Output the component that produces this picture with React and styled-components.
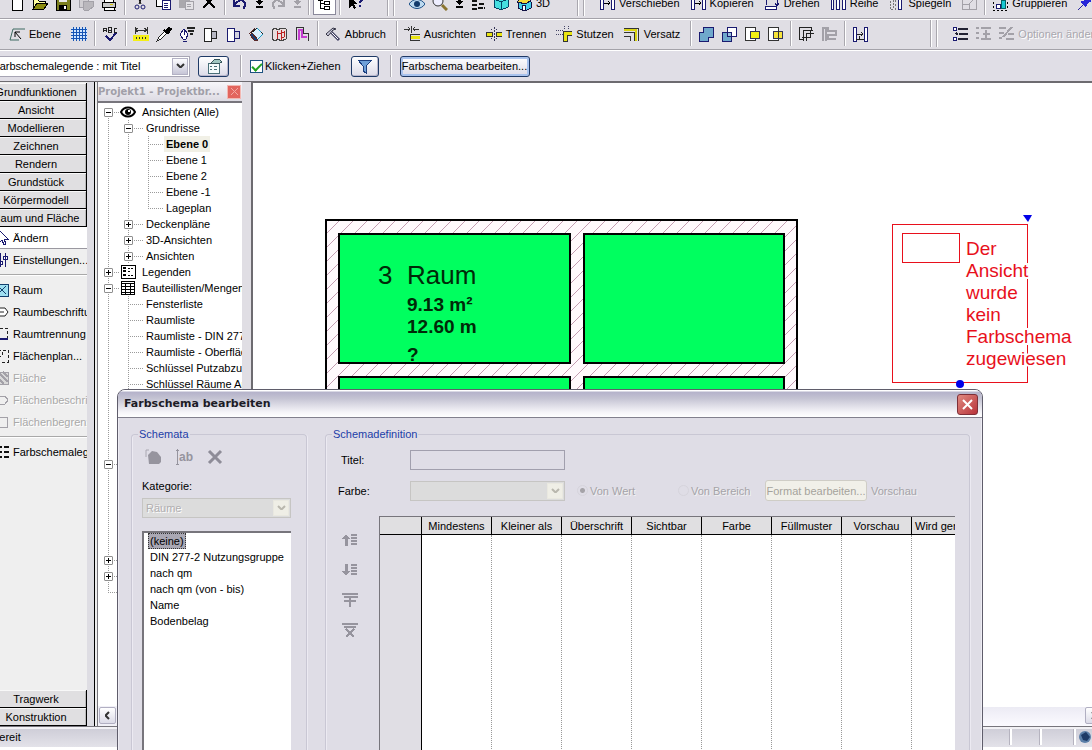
import React, { useState } from "react";
import styled, { createGlobalStyle } from "styled-components";

const NAVY = "#1a1a70";
const GREY = "#a3a1a8";

// 16x16 drawings for the toolbars and palettes
const icons = {
  newFile: <path d="M3 1h7l3 3v11H3z" fill="#fff" stroke="#000" />,
  open: (
    <>
      <path d="M1 14V4h5l1 2h6v3" fill="#ffffa0" stroke="#000" />
      <path d="M1 14l4-6h11l-4 6z" fill="#8c8c10" stroke="#000" />
    </>
  ),
  save: (
    <>
      <path d="M1 1h14v14H1z" fill="#7d8020" stroke="#000" />
      <path d="M4 1h8v6H4z" fill="#e8e8e8" />
      <path d="M4 10h8v5H4z" fill="#000" />
      <path d="M9 11h2v3H9z" fill="#fff" />
    </>
  ),
  preview: (
    <>
      <path d="M1 2h9v10H1z" fill="#d0ced2" stroke={GREY} />
      <path d="M5 6h10v6l-4 3H6z" fill="#b9b7bc" stroke={GREY} />
    </>
  ),
  print: (
    <>
      <path d="M4 1h9l-1 6H3z" fill="#fff" stroke="#000" />
      <path d="M1 7h13v5H1z" fill="#c9c9c9" stroke="#000" />
      <path d="M3 12h10l1 3H3z" fill="#fff" stroke="#000" />
      <path d="M9 9h3v1H9z" fill="#d6c600" />
    </>
  ),
  cut: (
    <g shapeRendering="auto" fill="none">
      <path d="M5 0l4 9M11 0L7 9" stroke="#000" />
      <circle cx="5" cy="12" r="2" stroke={NAVY} />
      <circle cx="11" cy="12" r="2" stroke={NAVY} />
    </g>
  ),
  copy: (
    <>
      <path d="M1 2h8v9H1z" fill="#fff" stroke="#000" />
      <path d="M7 5h8v9H7z" fill="#fff" stroke={NAVY} />
      <path d="M9 8h4M9 10h4M9 12h4" stroke={NAVY} />
    </>
  ),
  paste: (
    <>
      <path d="M1 1h11v12H1z" fill="#aaa8ad" />
      <path d="M7 6h8v8H7z" fill="#e4e2e6" stroke={GREY} />
      <path d="M9 9h4M9 11h4" stroke={GREY} />
    </>
  ),
  remove: <path d="M2 1l12 12M14 1L2 13" stroke="#000" strokeWidth="2" />,
  undo: (
    <path d="M2 4v7h6M3 10c3-6 9-6 10-1 0 2 0 3-2 5" fill="none" stroke={NAVY} strokeWidth="2" />
  ),
  redo: (
    <path d="M14 4v7H8M13 10C10 4 4 4 3 9c0 2 0 3 2 5" fill="none" stroke={GREY} strokeWidth="2" />
  ),
  tree: (
    <>
      <path d="M2 2h4v3H2zM8 6h5v3H8zM8 11h5v3H8z" fill="#fff" stroke="#000" />
      <path d="M4 5v8h4M4 8h4" fill="none" stroke="#000" />
    </>
  ),
  help: (
    <>
      <path d="M2 1v12l3-3 2 4 2-1-2-4h4z" fill="#000" />
      <path d="M11 4c0-3 4-3 4 0 0 2-2 2-2 4M13 10v2" fill="none" stroke={NAVY} strokeWidth="2" />
    </>
  ),
  view: (
    <g shapeRendering="auto">
      <path d="M0 9c4-6 12-6 16 0-4 6-12 6-16 0z" fill="#bcd9ef" stroke="#1c4f86" />
      <circle cx="8" cy="9" r="3" fill="#123a6b" />
    </g>
  ),
  zoom: (
    <g shapeRendering="auto">
      <circle cx="6" cy="6" r="5" fill="#eef" stroke="#333" />
      <path d="M10 10l5 5" stroke="#8a7430" strokeWidth="3" />
    </g>
  ),
  lines: (
    <path d="M2 6h5M2 10h5M2 14h5M10 4h5M9 9h6M8 13h7" stroke="#111" strokeWidth="2" strokeDasharray="5 1" />
  ),
  cube: (
    <>
      <path d="M1 4l7-3 7 3v8l-7 3-7-3z" fill="#45dfe0" stroke="#046" />
      <path d="M1 4l7 3 7-3M8 7v8" fill="none" stroke="#046" />
    </>
  ),
  house: (
    <>
      <path d="M2 7l5-5 8 5v6l-6 3-7-3z" fill="#45cfe8" stroke="#114" />
      <path d="M1 7l6-6 8 4-5 4z" fill="#f2d83a" stroke="#114" />
      <path d="M6 10h3v5H6z" fill="#fff" stroke="#114" />
    </>
  ),
  move: (
    <>
      <path d="M1 2h3v12H1zM12 2h3v12h-3z" fill="#fff" stroke={NAVY} />
      <path d="M5 8h6M9 6l2 2-2 2" fill="none" stroke="#000" />
    </>
  ),
  rotate: (
    <>
      <path d="M1 11h11v3H1z" fill="#fff" stroke={NAVY} />
      <path d="M2 2v8M13 3v7M11 8l2 3 2-3" fill="none" stroke={NAVY} />
    </>
  ),
  array: <path d="M1 2h2v12H1zM6 2h3v12H6zM12 2h3v12h-3z" fill="#fff" stroke={NAVY} />,
  mirror: (
    <>
      <path d="M2 2h3v12H2z" fill="none" stroke="#777" strokeDasharray="2 1" />
      <path d="M10 2h3v12h-3z" fill="#fff" stroke={NAVY} />
      <path d="M7 1v14" stroke="#777" strokeDasharray="2 2" />
    </>
  ),
  scale: <path d="M1 2h14v12H1zM1 9h7v5M8 9l6-6" fill="none" stroke={GREY} />,
  group: (
    <>
      <path d="M1 1h14v14H1z" fill="none" stroke="#000" strokeDasharray="2 2" />
      <path d="M4 9h4v4H4z" fill="#fff" stroke={NAVY} />
      <path d="M9 5h4v8H9z" fill="#19c8d4" stroke="#066" />
    </>
  ),
  pin: (
    <>
      <path d="M9 1l6 5-3 1-3 5-6-5 5-2z" fill="#2626d8" />
      <path d="M6 10l-5 5" stroke="#2626a0" />
    </>
  ),
  level: (
    <g shapeRendering="auto">
      <path d="M4 3h12M1 14h9M4 3L1 14" fill="none" stroke="#3f6b62" />
      <path d="M6 6h5M6 6v5M6 6l6 7" fill="none" stroke="#000" />
    </g>
  ),
  grid: (
    <>
      <path d="M1 2h15v12H1z" fill="#cfe6ff" />
      <path d="M0 3h16M0 6h16M0 9h16M0 12h16M2 1v14M5 1v14M8 1v14M11 1v14M14 1v14" stroke="#1554b5" />
    </>
  ),
  spell: (
    <>
      <path d="M1 6V2h3v4M1 4h3M6 1v5h3V1zM6 4h3M15 2h-3v4h3" fill="none" stroke="#222" />
      <path d="M4 10l4 4 6-7" fill="none" stroke={NAVY} strokeWidth="2" />
    </>
  ),
  measure: (
    <>
      <path d="M0 9h16v6H0z" fill="#f4ef16" />
      <path d="M2 1v7M14 1v7M2 4h12M5 2L2 4l3 2M11 2l3 2-3 2M3 13v-2M6 13v-2M9 13v-2M12 13v-2" fill="none" stroke="#333" />
    </>
  ),
  dropper: (
    <>
      <path d="M1 15l2-4 6-6 2 2-6 6z" fill="#fff" stroke="#222" />
      <path d="M8 4l4 4M10 5l3-3 2 1-3 4z" fill="#000" stroke="#000" strokeWidth="2" />
    </>
  ),
  paint: (
    <>
      <path d="M5 3l4 5-2 5H4L1 8z" fill="#fff" stroke={NAVY} />
      <path d="M5 3v6M4 15h4" stroke={NAVY} />
      <path d="M8 2h8M9 5h6M11 8h3" stroke="#222" strokeWidth="2" />
    </>
  ),
  joinLeft: (
    <>
      <path d="M2 2h7v13H2z" fill="#fff" stroke="#222" />
      <path d="M9 5h5v7H9z" fill="#b8b8c4" stroke="#222" />
    </>
  ),
  joinRight: (
    <>
      <path d="M2 2h7v13H2z" fill="#fff" stroke={NAVY} />
      <path d="M9 5h5v7H9z" fill="#d4d4e0" stroke={NAVY} />
    </>
  ),
  bucket: (
    <>
      <path d="M3 7l6-5 6 6-6 6z" fill="#d9efff" stroke="#222" />
      <path d="M1 8l6-6M2 9l5 6 3-1-6-7z" fill="#123f7c" stroke="#5a2a2a" />
      <path d="M9 2l4 4M10 13l5-5" stroke="#1c9bc4" />
    </>
  ),
  wall: (
    <>
      <path d="M1 4l3-2 3 2 3-2 5 1v10l-5 2-3-2-3 2-3-2z" fill="#e9dede" stroke="#444" />
      <path d="M6 5v8M10 4v10M7 8l6-2v5l-3 1" fill="none" stroke="#b22" />
    </>
  ),
  profile: (
    <>
      <path d="M2 14V1h7v6h5v8" fill="none" stroke="#333" />
      <path d="M5 14V4h3v7h5" fill="none" stroke="#c43fd0" strokeWidth="2" />
    </>
  ),
  hammer: (
    <g shapeRendering="auto">
      <path d="M5 5l9 9" stroke="#446" strokeWidth="3" />
      <path d="M6 6l7 7" stroke="#fff" />
      <path d="M1 8l7-6 3 1-3 1-5 6z" fill="#ccd" stroke="#334" />
    </g>
  ),
  align: (
    <>
      <path d="M0 3h6M4 1l2 2-2 2M15 3H9M11 1L9 3l2 2M7 0v7" fill="none" stroke="#333" />
      <path d="M6 8h10M6 14h10M6 8v6" fill="none" stroke="#333" />
      <path d="M7 11h9" stroke="#e9e412" strokeWidth="3" />
    </>
  ),
  split: (
    <>
      <path d="M0 6h6v4H0zM10 6h6v4h-6z" fill="#e9e412" stroke="#333" />
      <path d="M8 1v14M5 3l2 2M11 3L9 5M5 13l2-2M11 13l-2-2" stroke="#335" strokeDasharray="2 1" />
    </>
  ),
  trim: (
    <>
      <path d="M0 4h7M0 8h7M8 0v4M12 0v4" stroke="#446" strokeDasharray="1 1" />
      <path d="M16 5H7v10h4v-6h5z" fill="#e9e412" stroke="#333" />
    </>
  ),
  offset: (
    <>
      <path d="M0 2h14v13" fill="none" stroke="#333" />
      <path d="M0 4h12v11" fill="none" stroke="#d9d412" strokeWidth="2" />
      <path d="M0 6h10v9M0 10h6v5" fill="none" stroke="#333" />
    </>
  ),
  union: (
    <path d="M5 1h10v10h-5v4H1V6h4z" fill="#6fa8cc" stroke={NAVY} />
  ),
  subtract: (
    <>
      <path d="M1 6h9v9H1z" fill="#6fa8cc" stroke={NAVY} />
      <path d="M6 1h9v9H6z" fill="#fff" stroke={NAVY} />
      <path d="M6 6h4v4H6z" fill="#9cc4e0" stroke={NAVY} />
    </>
  ),
  yellowIn: (
    <>
      <path d="M1 1h10v13H1z" fill="#fff" stroke="#333" />
      <path d="M6 5h9v7H6z" fill="#f2ee12" stroke="#335" />
    </>
  ),
  yellowOut: (
    <>
      <path d="M1 1h10v13H1z" fill="#fff" stroke="#333" />
      <path d="M6 5h9v7H6z" fill="#f7e33a" stroke="#335" />
      <path d="M11 5v7" stroke="#333" />
    </>
  ),
  corner: (
    <path d="M1 1h12v3M1 1v12h4M5 4h10M5 4v11M8 7h8M8 7v8M4 11h8V4" fill="none" stroke="#222" />
  ),
  cornerOff: (
    <path d="M2 1v14M5 1v14M2 2h5v3h8v4H7v4h8" fill="none" stroke={GREY} strokeWidth="2" />
  ),
  attach: (
    <>
      <path d="M1 1h3v14H1zM12 1h3v14h-3z" fill="#fff" stroke={NAVY} />
      <path d="M4 13h8M5 8h6M9 6l2 2-2 2M7 10v4" fill="none" stroke="#222" />
    </>
  ),
  options: (
    <>
      <path d="M1 1h3v3H1zM1 11h3v3H1z" fill="#fff" stroke={NAVY} />
      <path d="M4 7l2 2M6 3h10M7 8h9M6 13h10" stroke="#223" strokeWidth="2" />
    </>
  ),
  optionsOff: (
    <>
      <path d="M1 2h3M1 7h3M1 12h3M6 2h10M6 13h10M8 8h7" stroke={GREY} strokeWidth="2" />
      <path d="M11 4v8" stroke={GREY} strokeWidth="2" />
    </>
  ),
  editOff: (
    <>
      <path d="M1 2h7M1 7h5M1 12h3M10 8h6M8 13h8" stroke={GREY} strokeWidth="2" />
      <path d="M14 1L5 11" stroke={GREY} strokeWidth="2" />
    </>
  ),
  properties: (
    <>
      <path d="M2 5h11v10H2z" fill="#f4fbfb" stroke="#4a6f78" />
      <path d="M4 8h2M8 8h3M4 11h2M8 11h3" stroke="#4a6f78" />
      <path d="M5 5l4-4h4l3 3-4 2-4-1z" fill="#9fc6c0" stroke="#37555c" />
    </>
  ),
  filter: <path d="M1 2h14L9 8v7l-3-2V8z" fill="#6fa0d8" stroke="#1c3f80" />,
  eye: (
    <g shapeRendering="auto">
      <path d="M1 8c3-6 11-6 14 0-3 6-11 6-14 0z" fill="#fff" stroke="#000" strokeWidth="2" />
      <circle cx="8" cy="8" r="3" fill="#000" />
      <path d="M8 6h2v2H8z" fill="#fff" />
    </g>
  ),
  legend: (
    <>
      <path d="M1 1h14v13H1z" fill="#fff" stroke="#000" />
      <path d="M3 4h3M3 7h3M3 11h3" stroke="#000" strokeWidth="2" />
      <path d="M8 4h5M8 7h3M8 11h5" stroke="#000" strokeDasharray="2 1" />
    </>
  ),
  schedule: (
    <>
      <path d="M1 1h13v13H1z" fill="#fff" stroke="#000" />
      <path d="M1 3h13M1 6h13M1 9h13M1 12h13M5 3v11M10 3v11" stroke="#000" />
    </>
  ),
  cursor: <path d="M6 0v13l3-3 2 5 2-1-2-5h4z" fill="#fff" stroke={NAVY} />,
  settings: (
    <path d="M7 1v14M12 1v14M5 9h4v3H5zM10 4h4v3h-4z" fill="#fff" stroke={NAVY} />
  ),
  room: (
    <>
      <path d="M2 2h13v12H2z" fill="#9fe0f2" stroke="#14406e" />
      <path d="M5 4l8 8M13 4l-8 8" stroke="#14406e" />
    </>
  ),
  tag: (
    <g shapeRendering="auto">
      <path d="M2 4h10l3 4-3 4H2z" fill="#fff" stroke="#222" />
      <path d="M6 8h5" stroke="#222" />
    </g>
  ),
  divider: (
    <>
      <path d="M2 2h12v12" fill="none" stroke="#222" strokeDasharray="3 2" />
      <path d="M2 13h13" stroke={NAVY} strokeWidth="2" />
    </>
  ),
  areaPlan: <path d="M5 2h10v12H4V8h5V2" fill="none" stroke="#222" strokeDasharray="3 2" />,
  area: (
    <>
      <path d="M2 2h13v12H2z" fill="#d8d8d8" stroke={GREY} />
      <path d="M5 2l10 10M2 5l9 9M10 2l5 5" stroke={GREY} strokeWidth="2" />
    </>
  ),
  tagOff: <path d="M2 4h10l3 4-3 4H2z" fill="none" stroke={GREY} />,
  boundOff: <path d="M2 3h12v10H2" fill="none" stroke={GREY} />,
  scheme: (
    <path d="M6 3h3M6 8h3M6 13h3M11 3h5M11 8h5M11 13h5" stroke="#111" strokeWidth="2" />
  ),
  duplicate: (
    <g shapeRendering="auto">
      <path d="M1 1v7M1 1h3" fill="none" stroke="#aaa8b2" />
      <path d="M3 6l4-4 5 1 4 5v5l-2 2H4z" fill="#96949e" />
    </g>
  ),
  rename: (
    <path d="M1 0v16M0 1h3M0 15h3" fill="none" stroke="#96949e" />
  ),
  cross: (
    <path d="M2 2l12 12M14 2L2 14" stroke="#8e8c98" strokeWidth="3" shapeRendering="auto" />
  ),
  rowUp: (
    <>
      <path d="M3 14V7H0l4-5 4 5H6v7z" fill="#96949e" />
      <path d="M9 3h6M9 6h6M9 9h6M9 12h6" stroke="#96949e" strokeWidth="2" />
    </>
  ),
  rowDown: (
    <>
      <path d="M3 2v7H0l4 5 4-5H6V2z" fill="#96949e" />
      <path d="M9 3h6M9 6h6M9 9h6M9 12h6" stroke="#96949e" strokeWidth="2" />
    </>
  ),
  rowAdd: <path d="M0 2h16M2 5h14M8 5v10M2 9h12" stroke="#96949e" strokeWidth="2" />,
  rowDelete: <path d="M0 2h16M2 5h12M4 7l8 8M12 7l-8 8" stroke="#96949e" strokeWidth="2" />,
};

function Icon({ name }) {
  return (
    <Glyph viewBox="0 0 16 16" shapeRendering="crispEdges" aria-hidden="true">
      {icons[name]}
    </Glyph>
  );
}

const standardTools = [
  "newFile", "open", "save", "preview", "print", "|",
  "cut", "copy", "paste", "remove", "|",
  "undo", "v", "redo", "v-off", "|",
];

const modifyTools = [
  ["move", "Verschieben"],
  ["move", "Kopieren"],
  ["rotate", "Drehen"],
  ["array", "Reihe"],
  ["mirror", "Spiegeln"],
];

const editTools = [
  ["align", "Ausrichten"],
  ["split", "Trennen"],
  ["trim", "Stutzen"],
  ["offset", "Versatz"],
];

const categories = [
  "Grundfunktionen", "Ansicht", "Modellieren", "Zeichnen",
  "Rendern", "Grundstück", "Körpermodell", "Raum und Fläche",
];

const roomTools = [
  ["room", "Raum"],
  ["tag", "Raumbeschriftung"],
  ["divider", "Raumtrennung"],
  ["areaPlan", "Flächenplan..."],
  ["area", "Fläche", true],
  ["tagOff", "Flächenbeschriftung", true],
  ["boundOff", "Flächenbegrenzung", true],
];

// one cell per level: "|" passes through, "+"/"-" expander, "t" branch, "l" last branch
const treeRows = [
  { cells: "-", icon: "eye", label: "Ansichten (Alle)", first: true },
  { cells: "|-", label: "Grundrisse" },
  { cells: "||t", label: "Ebene 0", active: true },
  { cells: "||t", label: "Ebene 1" },
  { cells: "||t", label: "Ebene 2" },
  { cells: "||t", label: "Ebene -1" },
  { cells: "||l", label: "Lageplan" },
  { cells: "|+", label: "Deckenpläne" },
  { cells: "|+", label: "3D-Ansichten" },
  { cells: "|+", label: "Ansichten" },
  { cells: "+", icon: "legend", label: "Legenden" },
  { cells: "-", icon: "schedule", label: "Bauteillisten/Mengen" },
  { cells: "|t", label: "Fensterliste" },
  { cells: "|t", label: "Raumliste" },
  { cells: "|t", label: "Raumliste - DIN 277" },
  { cells: "|t", label: "Raumliste - Oberflächen" },
  { cells: "|t", label: "Schlüssel Putzabzug" },
  { cells: "|t", label: "Schlüssel Räume Art" },
  { cells: "|t" },
  { cells: "|t" },
  { cells: "|t" },
  { cells: "|l" },
  { cells: "-" },
  { cells: "|t" },
  { cells: "|t" },
  { cells: "|t" },
  { cells: "|t" },
  { cells: "|l" },
  { cells: "+" },
  { cells: "+" },
  { cells: "l" },
];

const schemes = ["(keine)", "DIN 277-2 Nutzungsgruppe", "nach qm", "nach qm (von - bis)", "Name", "Bodenbelag"];

const columns = ["Mindestens", "Kleiner als", "Überschrift", "Sichtbar", "Farbe", "Füllmuster", "Vorschau"];

function Tool({ icon, label, off, pressed }) {
  return (
    <ToolButton disabled={off} $pressed={pressed} $labelled={!!label} aria-label={label || icon}>
      <Icon name={icon} />
      {label}
    </ToolButton>
  );
}

function DropArrow({ off }) {
  return (
    <ArrowButton disabled={off} aria-label="Liste öffnen">
      <svg width="9" height="12" viewBox="0 0 9 12" shapeRendering="crispEdges">
        <path d="M3 1h3v3h2L5 8H4L1 4h2zM1 9h7v2H1z" fill={off ? GREY : "#000"} />
      </svg>
    </ArrowButton>
  );
}

function Toolbars() {
  return (
    <header>
      <Toolbar>
        {standardTools.map((tool, i) => {
          if (tool === "|") return <Separator key={i} />;
          if (tool[0] === "v") return <DropArrow key={i} off={tool === "v-off"} />;
          return <Tool key={i} icon={tool} off={["preview", "paste", "redo"].includes(tool)} />;
        })}
        <Tool icon="tree" pressed />
        <Separator />
        <Tool icon="help" />
        <Grip $before="20px" />
        <Tool icon="view" />
        <Tool icon="zoom" />
        <DropArrow />
        <Tool icon="lines" />
        <Tool icon="cube" />
        <Tool icon="house" label="3D" />
        <Grip $before="20px" />
        {modifyTools.map(([icon, label]) => (
          <Tool key={label} icon={icon} label={label} />
        ))}
        <Tool icon="scale" off />
        <Separator />
        <Tool icon="group" label="Gruppieren" />
        <Tool icon="pin" />
      </Toolbar>

      <Toolbar>
        <Tool icon="level" label="Ebene" />
        <Tool icon="grid" />
        <Separator />
        <Tool icon="spell" />
        <Separator />
        {["measure", "dropper", "paint", "joinLeft", "joinRight", "bucket", "wall", "profile"].map((icon) => (
          <Tool key={icon} icon={icon} />
        ))}
        <Separator />
        <Tool icon="hammer" label="Abbruch" />
        <Separator />
        {editTools.map(([icon, label]) => (
          <Tool key={label} icon={icon} label={label} />
        ))}
        <Separator />
        <Tool icon="union" />
        <Tool icon="subtract" />
        <Tool icon="yellowIn" />
        <Tool icon="yellowOut" />
        <Separator />
        <Tool icon="corner" />
        <Tool icon="cornerOff" off />
        <Separator />
        <Tool icon="attach" />
        <Grip $before="58px" />
        <Tool icon="options" />
        <Tool icon="optionsOff" off />
        <Tool icon="editOff" label="Optionen ändern" off />
      </Toolbar>

      <OptionsBar>
        <TypeCombo>
          <select aria-label="Typ" defaultValue="mt">
            <option value="mt">Farbschemalegende : mit Titel</option>
          </select>
          <Chevron />
        </TypeCombo>
        <PushButton $width="31px" aria-label="Eigenschaften">
          <Icon name="properties" />
        </PushButton>
        <Divider />
        <CheckLabel>
          <input type="checkbox" defaultChecked />
          Klicken+Ziehen
        </CheckLabel>
        <PushButton $width="28px" aria-label="Filter">
          <Icon name="filter" />
        </PushButton>
        <Divider />
        <PushButton $width="130px" $focus>
          Farbschema bearbeiten...
        </PushButton>
      </OptionsBar>
    </header>
  );
}

function Chevron({ off }) {
  return (
    <ChevronBox $off={off}>
      <svg width="9" height="6" viewBox="0 0 9 6">
        <path d="M1 1l3 3h1l3-3" fill="none" stroke={off ? "#b9b7ae" : "#333"} strokeWidth="2" />
      </svg>
    </ChevronBox>
  );
}

function DesignBar() {
  return (
    <Palette>
      {categories.map((name) => (
        <Category key={name}>{name}</Category>
      ))}
      <PaletteItem $active>
        <Icon name="cursor" />
        Ändern
      </PaletteItem>
      <PaletteItem>
        <Icon name="settings" />
        Einstellungen...
      </PaletteItem>
      <Rule />
      {roomTools.map(([icon, label, off]) => (
        <PaletteItem key={label} disabled={off}>
          <Icon name={icon} />
          {label}
        </PaletteItem>
      ))}
      <Rule />
      <PaletteItem>
        <Icon name="scheme" />
        Farbschemalegende
      </PaletteItem>
      <Spacer />
      <Category>Tragwerk</Category>
      <Category>Konstruktion</Category>
    </Palette>
  );
}

function ProjectBrowser() {
  return (
    <Browser>
      <BrowserTitle>
        <span>Projekt1 - Projektbr...</span>
        <button aria-label="Schließen">
          <svg width="9" height="9" viewBox="0 0 9 9">
            <path d="M1 1l7 7M8 1L1 8" stroke="#f3aaa4" />
          </svg>
        </button>
      </BrowserTitle>
      <Tree>
        {treeRows.map((row, i) => (
          <TreeRow key={i}>
            {row.cells.split("").map((cell, level) => (
              <Guide key={level} $kind={cell} $first={row.first}>
                {(cell === "+" || cell === "-") && (
                  <Expander aria-label={cell === "+" ? "Öffnen" : "Zuklappen"} $closed={cell === "+"} />
                )}
              </Guide>
            ))}
            <Stub $short={!!row.icon} />
            {row.icon && <Icon name={row.icon} />}
            {row.label && (
              <TreeLabel $active={row.active} $wide={!!row.icon}>
                {row.label}
              </TreeLabel>
            )}
          </TreeRow>
        ))}
      </Tree>
      <ScrollTrack>
        <ScrollButton aria-label="Nach links">
          <svg width="7" height="9" viewBox="0 0 7 9">
            <path d="M5 1L2 4v1l3 3" fill="none" stroke="#333" strokeWidth="2" />
          </svg>
        </ScrollButton>
      </ScrollTrack>
    </Browser>
  );
}

function Drawing() {
  const note = ["Der", "Ansicht", "wurde", "kein", "Farbschema", "zugewiesen"];
  return (
    <Sheet aria-label="Grundriss">
      <defs>
        <pattern id="hatch" width="14" height="14" patternUnits="userSpaceOnUse">
          <path d="M0 14L14 0" stroke="#c49db2" />
        </pattern>
      </defs>
      <g stroke="#000" strokeWidth="2">
        <rect x="73" y="137" width="471" height="420" fill="#fff9fc" />
        <rect x="73" y="137" width="471" height="420" fill="url(#hatch)" />
        <g fill="#00ff5f">
          <rect x="86" y="151" width="231" height="129" />
          <rect x="331" y="151" width="200" height="129" />
          <rect x="86" y="294" width="231" height="129" />
          <rect x="331" y="294" width="200" height="129" />
        </g>
      </g>
      <g fill="#002a08" fontSize="19" fontWeight="bold">
        <text x="125" y="201" fontSize="26" fontWeight="normal">3</text>
        <text x="154" y="201" fontSize="26" fontWeight="normal">Raum</text>
        <text x="154" y="228">9.13 m²</text>
        <text x="154" y="250">12.60 m</text>
        <text x="154" y="278">?</text>
      </g>
      <g fill="none" stroke="#e8101c" shapeRendering="crispEdges">
        <rect x="639" y="141" width="135" height="158" />
        <rect x="649" y="150" width="57" height="29" />
      </g>
      <g fill="#e8101c" stroke="#fff" strokeWidth="4" paintOrder="stroke" fontSize="19">
        {note.map((line, i) => (
          <text key={line} x="713" y={172 + i * 22}>
            {line}
          </text>
        ))}
      </g>
      <path d="M770 132h9l-4 7z" fill="#0000e8" />
      <circle cx="707" cy="301" r="4" fill="#0000e8" />
    </Sheet>
  );
}

function SchemeDialog() {
  const [selected, setSelected] = useState("(keine)");

  return (
    <Dialog role="dialog" aria-labelledby="dialog-title">
      <TitleBar>
        <h1 id="dialog-title">Farbschema bearbeiten</h1>
        <CloseButton aria-label="Schließen">
          <svg width="13" height="13" viewBox="0 0 13 13">
            <path d="M2 2l9 9M11 2l-9 9" stroke="#fff" strokeWidth="2" />
          </svg>
        </CloseButton>
      </TitleBar>
      <DialogBody>
        <Group $width="176px">
          <legend>Schemata</legend>
          <SchemeTools>
            <button disabled aria-label="Duplizieren"><Icon name="duplicate" /></button>
            <button disabled aria-label="Umbenennen"><Icon name="rename" /><b>ab</b></button>
            <button disabled aria-label="Löschen"><Icon name="cross" /></button>
          </SchemeTools>
          <FieldLabel htmlFor="category">Kategorie:</FieldLabel>
          <Combo $off>
            <select id="category" disabled>
              <option>Räume</option>
            </select>
            <Chevron off />
          </Combo>
          <ListBox role="listbox" aria-label="Schemata">
            {schemes.map((name) => (
              <li key={name} role="option" aria-selected={name === selected}>
                <Scheme $selected={name === selected} onClick={() => setSelected(name)}>
                  {name}
                </Scheme>
              </li>
            ))}
          </ListBox>
        </Group>

        <Group $grow>
          <legend>Schemadefinition</legend>
          <TitleRow>
            <label htmlFor="title">Titel:</label>
            <input id="title" type="text" disabled />
          </TitleRow>
          <ColorRow>
            <label htmlFor="color">Farbe:</label>
            <Combo $off $width="155px">
              <select id="color" disabled />
              <Chevron off />
            </Combo>
            <RadioLabel $width="101px">
              <input type="radio" name="mode" defaultChecked disabled />
              Von Wert
            </RadioLabel>
            <RadioLabel $width="87px">
              <input type="radio" name="mode" disabled />
              Von Bereich
            </RadioLabel>
            <FormatButton disabled>Format bearbeiten...</FormatButton>
            <Muted>Vorschau</Muted>
          </ColorRow>
          <TableArea>
            <RowTools>
              {["rowUp", "rowDown", "rowAdd", "rowDelete"].map((name) => (
                <button key={name} disabled aria-label={name}>
                  <Icon name={name} />
                </button>
              ))}
            </RowTools>
            <TableFrame>
              <Table>
                <thead>
                  <tr>
                    <Th $narrow aria-label="Zeile" />
                    {columns.map((name) => (
                      <Th key={name}>{name}</Th>
                    ))}
                    <Th $start>Wird genutzt</Th>
                  </tr>
                </thead>
                <tbody>
                  <tr>
                    <Td $head />
                    {columns.map((name) => (
                      <Td key={name} />
                    ))}
                    <Td />
                  </tr>
                </tbody>
              </Table>
            </TableFrame>
          </TableArea>
        </Group>
      </DialogBody>
    </Dialog>
  );
}

export default function App() {
  return (
    <Screen>
      <GlobalStyle />
      <MainWindow>
        <Toolbars />
        <Workspace>
          <DesignBar />
          <Splitter />
          <ProjectBrowser />
          <Canvas>
            <Drawing />
            <CanvasScroll>
              <ScrollButton aria-label="Nach rechts">
                <svg width="7" height="9" viewBox="0 0 7 9">
                  <path d="M2 1l3 3v1L2 8" fill="none" stroke="#333" strokeWidth="2" />
                </svg>
              </ScrollButton>
            </CanvasScroll>
          </Canvas>
        </Workspace>
        <StatusBar>
          <span>Bereit</span>
          <Pane />
          <Pane />
          <Pane $wide />
          <svg width="16" height="18" viewBox="0 0 16 18">
            <circle cx="9" cy="9" r="6" fill="#5c7fa8" />
            <path d="M5 7l5-3 4 5-3 4-4-1z" fill="#1e3a66" />
          </svg>
        </StatusBar>
      </MainWindow>
      <SchemeDialog />
    </Screen>
  );
}

const GlobalStyle = createGlobalStyle`
  * {
    box-sizing: border-box;
  }

  body {
    margin: 0;
    font-family: "Liberation Sans", Arial, sans-serif;
    font-size: 11px;
    line-height: 16px;
    color: #000;
  }

  button, input, select {
    font: inherit;
    color: inherit;
    margin: 0;
  }

  button {
    border: none;
    background: none;
    padding: 0;
  }
`;

const Screen = styled.div`
  position: relative;
  height: 100vh;
  overflow: hidden;
  background: #dfdde5;
`;

// the program window reaches past the top left corner of the screen
const MainWindow = styled.div`
  display: flex;
  flex-direction: column;
  height: calc(100vh + 12px);
  margin: -12px 0 0 -16px;
`;

const Glyph = styled.svg`
  width: 16px;
  height: 16px;
  flex: none;
`;

const Toolbar = styled.div`
  display: flex;
  align-items: center;
  height: 31px;
  padding: 0 0 2px 22px;
  overflow: hidden;
  background: #e0dee4;
  border-top: 1px solid #fff;
  border-bottom: 1px solid #a4a2a9;
`;

const ToolButton = styled.button`
  display: flex;
  align-items: center;
  flex: none;
  gap: 4px;
  height: 24px;
  padding: 0 ${({ $labelled }) => ($labelled ? "7px" : "4px")} 0 3px;
  white-space: nowrap;
  background: ${({ $pressed }) => ($pressed ? "#fff" : "none")};
  box-shadow: ${({ $pressed }) => ($pressed ? "inset 0 0 0 1px #8a889a" : "none")};

  &:disabled {
    color: #a9a7ae;
    text-shadow: 1px 1px 0 #fff;
  }
`;

const ArrowButton = styled.button`
  display: flex;
  align-items: center;
  flex: none;
  width: 15px;
  height: 24px;
  padding-left: 3px;
`;

const Separator = styled.span`
  flex: none;
  width: 1px;
  height: 25px;
  margin: 0 4px 0 3px;
  background: #a9a7ae;
  box-shadow: 1px 0 0 #fff;
`;

const Grip = styled.span`
  flex: none;
  width: 7px;
  height: 27px;
  margin: 0 12px 0 ${({ $before }) => $before};
  border-left: 1px solid #a9a7ae;
  border-right: 1px solid #a9a7ae;
  box-shadow: inset 1px 0 0 #fff, 1px 0 0 #fff;
`;

const OptionsBar = styled.div`
  display: flex;
  align-items: center;
  height: 32px;
  background: #e0dee6;
  border-top: 1px solid #fff;
  border-bottom: 1px solid #6d6b70;
`;

const Combo = styled.div`
  display: flex;
  width: ${({ $width }) => $width || "auto"};
  height: ${({ $off }) => ($off ? "20px" : "21px")};
  padding: 1px;
  background: ${({ $off }) => ($off ? "#dcdcdc" : "#fff")};
  border: 1px solid ${({ $off }) => ($off ? "#c6c5c3" : "#a7a5b4")};

  select {
    flex: 1;
    min-width: 0;
    padding: 0 2px;
    border: none;
    appearance: none;
    background: none;
    opacity: 1;
  }

  select:disabled {
    color: #b0aeb0;
    text-shadow: 1px 1px 0 #fff;
  }
`;

const TypeCombo = styled(Combo)`
  width: 206px;
  padding-left: 6px;
`;

const ChevronBox = styled.span`
  display: flex;
  align-items: center;
  justify-content: center;
  width: 16px;
  background: ${({ $off }) => ($off ? "#efeee6" : "linear-gradient(#fdfdff, #c6c5d6)")};
  border: 1px solid ${({ $off }) => ($off ? "#e9e8e0" : "#b3b1c4")};
`;

const PushButton = styled.button`
  display: flex;
  align-items: center;
  justify-content: center;
  width: ${({ $width }) => $width};
  height: 21px;
  margin-left: 8px;
  white-space: nowrap;
  background: linear-gradient(#fff, #dcdbe8);
  border: 1px solid #1f3a66;
  border-radius: 3px;
  box-shadow: ${({ $focus }) => ($focus ? "inset 0 0 0 2px #a9c3ee" : "inset -1px -1px 0 #b9b7cc")};
`;

const Divider = styled.span`
  width: 1px;
  height: 22px;
  margin: 0 1px 0 11px;
  background: #a9a7ae;
  box-shadow: 1px 0 0 #fff;
`;

const CheckLabel = styled.label`
  display: flex;
  align-items: center;
  gap: 2px;
  margin: 0 2px 0 8px;

  input {
    appearance: none;
    width: 13px;
    height: 13px;
    background: #fff;
    border: 1px solid #1d5281;
  }

  input:checked::before {
    content: "";
    display: block;
    width: 8px;
    height: 4px;
    margin: 2px 1px;
    border: solid #21a121;
    border-width: 0 0 2px 2px;
    transform: rotate(-45deg);
  }
`;

const Workspace = styled.div`
  display: flex;
  flex: 1;
  min-height: 0;
`;

const Palette = styled.nav`
  display: flex;
  flex-direction: column;
  flex: none;
  width: 103px;
  padding-top: 1px;
  overflow: hidden;
  background: #efefef;
`;

const Category = styled.button`
  flex: none;
  height: 18px;
  padding-left: 2px;
  line-height: 18px;
  white-space: nowrap;
  background: #e0dfe1;
  border-right: 1px solid #000;
  border-bottom: 1px solid #000;
  box-shadow: inset 0 1px 0 #f8f8f8, inset -1px 0 0 #bbb;
`;

const PaletteItem = styled.button`
  display: flex;
  align-items: center;
  flex: none;
  gap: 4px;
  height: 22px;
  padding-left: 9px;
  white-space: nowrap;
  background: ${({ $active }) => ($active ? "#fff" : "none")};
  border-bottom: 1px solid ${({ $active }) => ($active ? "#9a98a0" : "transparent")};

  &:disabled {
    color: #a9a9a9;
    text-shadow: 1px 1px 0 #fff;
  }
`;

const Rule = styled.hr`
  flex: none;
  width: 100%;
  height: 2px;
  margin: 3px 0;
  border: none;
  border-top: 1px solid #a9a9a9;
  background: #fff;
`;

const Spacer = styled.div`
  flex: 1;
`;

const Splitter = styled.div`
  flex: none;
  width: 11px;
  background: linear-gradient(90deg, #dedde3 0 7px, #000 7px 8px, #eee 8px 10px, #77757c 10px);
`;

const Browser = styled.aside`
  display: flex;
  flex-direction: column;
  flex: none;
  width: 153px;
  padding-right: 9px;
  background: #e0dee4;
`;

const BrowserTitle = styled.div`
  display: flex;
  align-items: center;
  justify-content: space-between;
  flex: none;
  height: 21px;
  font: bold 10px/16px "DejaVu Sans", Verdana, sans-serif;
  white-space: nowrap;
  color: #a19fa8;
  background: linear-gradient(#f7f6fa, #dddbe3);
  border-bottom: 2px solid #77757c;

  span {
    flex: 1;
    min-width: 0;
    overflow: hidden;
  }

  button {
    display: flex;
    align-items: center;
    justify-content: center;
    width: 14px;
    height: 14px;
    margin-right: 1px;
    background: #e2655e;
    border: 1px solid #f2b8b2;
  }
`;

const Tree = styled.div`
  flex: 1;
  min-height: 0;
  overflow: hidden;
  padding-top: 1px;
  background: #fff;
`;

const TreeRow = styled.div`
  display: flex;
  align-items: center;
  height: 16px;
  white-space: nowrap;
`;

const dots = "repeating-linear-gradient(#9a9a9a 0 1px, transparent 1px 2px)";

const Guide = styled.span`
  display: flex;
  align-items: center;
  justify-content: center;
  flex: none;
  width: 20px;
  height: 16px;
  padding-left: 1px;
  background-image: ${dots}, repeating-linear-gradient(90deg, #9a9a9a 0 1px, transparent 1px 2px);
  background-repeat: no-repeat;
  background-position: 10px ${({ $first }) => ($first ? "8px" : "0")}, 10px 8px;
  background-size: 1px ${({ $kind }) => ($kind === "l" ? "8px" : "16px")},
    ${({ $kind }) => ($kind === "|" ? "0" : "10px")} 1px;
`;

const Expander = styled.button`
  width: 9px;
  height: 9px;
  border: 1px solid #8f8f8f;
  border-radius: 1px;
  background:
    linear-gradient(#000, #000) center / 5px 1px no-repeat,
    linear-gradient(#000, #000) center / 1px ${({ $closed }) => ($closed ? "5px" : "0")} no-repeat,
    #fff;
`;

const Stub = styled.span`
  flex: none;
  width: ${({ $short }) => ($short ? "2px" : "6px")};
  height: 1px;
  background: repeating-linear-gradient(90deg, #9a9a9a 0 1px, transparent 1px 2px);
`;

const TreeLabel = styled.span`
  margin-left: ${({ $wide }) => ($wide ? "4px" : "0")};
  padding: 0 2px;
  font-weight: ${({ $active }) => ($active ? "bold" : "normal")};
  background: ${({ $active }) => ($active ? "#f1f0e6" : "none")};
`;

const ScrollTrack = styled.div`
  display: flex;
  flex: none;
  height: 20px;
  padding: 1px;
  background: #f1f0f7;
`;

const ScrollButton = styled.button`
  display: flex;
  align-items: center;
  justify-content: center;
  width: 17px;
  height: 17px;
  background: linear-gradient(#fff, #dcdbe8);
  border: 1px solid #b1afc2;
  border-radius: 2px;
`;

const Canvas = styled.main`
  display: flex;
  flex-direction: column;
  flex: 1;
  min-width: 0;
  background: #fff;
  border-left: 2px solid #6d6b70;
  border-top: 1px solid #6d6b70;
`;

const Sheet = styled.svg`
  flex: 1;
  width: 100%;
  min-height: 0;
  font-family: "Liberation Sans", Arial, sans-serif;
`;

const CanvasScroll = styled.div`
  display: flex;
  justify-content: flex-end;
  flex: none;
  height: 19px;
  margin-right: -10px;
  background: linear-gradient(#ecebf4, #fbfaff);
`;

const StatusBar = styled.footer`
  display: flex;
  align-items: center;
  justify-content: flex-end;
  flex: none;
  height: 24px;
  padding: 0 0 3px 8px;
  background: linear-gradient(#f2f1f5 0 2px, #cfced8 2px, #e3e2e9 20px, #fff 20px);
  border-top: 1px solid #77757c;

  span {
    flex: 1;
  }
`;

const Pane = styled.div`
  width: ${({ $wide }) => ($wide ? "34px" : "30px")};
  height: 16px;
  border-right: 2px solid #fff;
  box-shadow: inset -1px 0 0 #b5b3bf;
`;

const Dialog = styled.section`
  position: absolute;
  top: 389px;
  right: 109px;
  bottom: -12px;
  left: 117px;
  display: flex;
  flex-direction: column;
  background: #dfdde6;
  border: 1px solid #5f5d6b;
  border-radius: 8px 8px 0 0;
  box-shadow: inset 0 0 0 1px #eeedf4;
`;

const TitleBar = styled.div`
  display: flex;
  align-items: center;
  justify-content: space-between;
  flex: none;
  height: 28px;
  padding: 1px 4px 0 6px;
  background: linear-gradient(#fff 0 1px, #b4b2ca 2px, #c3c2d2 8px, #f5f4f8 22px, #fff);
  border-bottom: 1px solid #82808d;
  border-radius: 7px 7px 0 0;

  h1 {
    margin: 0;
    font: bold 11px/16px "DejaVu Sans", Verdana, sans-serif;
    color: #1c1b26;
  }
`;

const CloseButton = styled.button`
  display: flex;
  align-items: center;
  justify-content: center;
  width: 21px;
  height: 21px;
  background: linear-gradient(135deg, #e08a80, #b8323a);
  border: 1px solid #7e2f38;
  border-radius: 3px;
`;

const DialogBody = styled.div`
  display: flex;
  flex: 1;
  gap: 18px;
  min-height: 0;
  padding: 8px 12px 0 13px;
`;

const Group = styled.fieldset`
  display: flex;
  flex-direction: column;
  flex: ${({ $grow }) => ($grow ? "1" : "none")};
  width: ${({ $width }) => $width || "auto"};
  min-width: 0;
  margin: 0;
  padding: 0 ${({ $grow }) => ($grow ? "14px" : "15px")} 0 10px;
  border: 1px solid #c9c7d4;
  border-bottom: none;
  border-radius: 4px 4px 0 0;
  box-shadow: inset 1px 0 0 #eceaf2, 1px 0 0 #eceaf2;

  legend {
    margin-left: -4px;
    padding: 0 1px;
    color: #1c3ea8;
  }
`;

const SchemeTools = styled.div`
  display: flex;
  gap: 15px;
  height: 30px;
  padding: 6px 3px 0;

  button {
    display: flex;
    align-items: center;
    width: 16px;
    height: 18px;
    font-size: 12px;
    color: #96949e;
  }

  b {
    margin-left: -13px;
  }
`;

const FieldLabel = styled.label`
  margin: 6px 0 4px;
`;

const ListBox = styled.ul`
  flex: 1;
  margin: 13px 0 0;
  padding: 0 0 0 4px;
  list-style: none;
  background: #fff;
  border-top: 2px solid #77757c;
  border-left: 2px solid #77757c;

  li {
    height: 16px;
  }
`;

const Scheme = styled.button`
  display: block;
  height: 16px;
  padding: 0 1px;
  white-space: nowrap;
  border: 1px ${({ $selected }) => ($selected ? "dotted #333" : "solid transparent")};
  line-height: 14px;
  background: ${({ $selected }) => ($selected ? "#a9a7b3" : "none")};
`;

const TitleRow = styled.div`
  display: flex;
  align-items: center;
  padding: 8px 0 0 5px;

  label {
    width: 69px;
  }

  input {
    width: 155px;
    height: 20px;
    background: #dfdde6;
    border: 1px solid #a19fad;
  }
`;

const ColorRow = styled.div`
  display: flex;
  align-items: center;
  padding: 10px 0 15px 2px;
  white-space: nowrap;

  > label:first-child {
    width: 72px;
  }
`;

const RadioLabel = styled.label`
  display: flex;
  align-items: center;
  gap: 2px;
  flex: none;
  width: ${({ $width }) => $width};
  margin-left: 12px;
  color: #a5a3a8;
  text-shadow: 1px 1px 0 #f2f2f2;

  & + & {
    margin-left: 0;
  }

  input {
    appearance: none;
    width: 11px;
    height: 11px;
    border: 1px solid #d6d4dc;
    border-radius: 50%;
  }

  input:checked {
    background: radial-gradient(#a5a3a8 0 2px, transparent 3px);
  }
`;

const FormatButton = styled.button`
  width: 102px;
  height: 21px;
  overflow: hidden;
  color: #a5a39c;
  background: #f1f0e9;
  border: 1px solid #cfcdc6;
  border-radius: 3px;
`;

const Muted = styled.span`
  margin-left: 4px;
  color: #a5a3a8;
  text-shadow: 1px 1px 0 #f2f2f2;
`;

const TableArea = styled.div`
  display: flex;
  flex: 1;
  min-height: 0;
`;

const RowTools = styled.div`
  display: flex;
  flex-direction: column;
  gap: 14px;
  width: 43px;
  padding: 16px 0 0 6px;

  button {
    width: 16px;
    height: 16px;
  }
`;

const TableFrame = styled.div`
  flex: 1;
  min-width: 0;
  overflow: hidden;
  background: #fff;
  border-top: 1px solid #77757c;
  border-left: 1px solid #77757c;
`;

const Table = styled.table`
  width: 602px;
  height: 100%;
  table-layout: fixed;
  border-collapse: separate;
  border-spacing: 0;
`;

const Th = styled.th`
  width: ${({ $narrow }) => ($narrow ? "42px" : "70px")};
  height: 18px;
  padding: 0 3px;
  font-weight: normal;
  text-align: ${({ $start }) => ($start ? "left" : "center")};
  white-space: nowrap;
  background: #e0dfe1;
  border-right: 1px solid #000;
  border-bottom: 1px solid #000;
`;

const Td = styled.td`
  background: ${({ $head }) => ($head ? "#e0dee4" : "#fff")};
  border-right: 1px ${({ $head }) => ($head ? "solid #000" : "dotted #999")};
`;
